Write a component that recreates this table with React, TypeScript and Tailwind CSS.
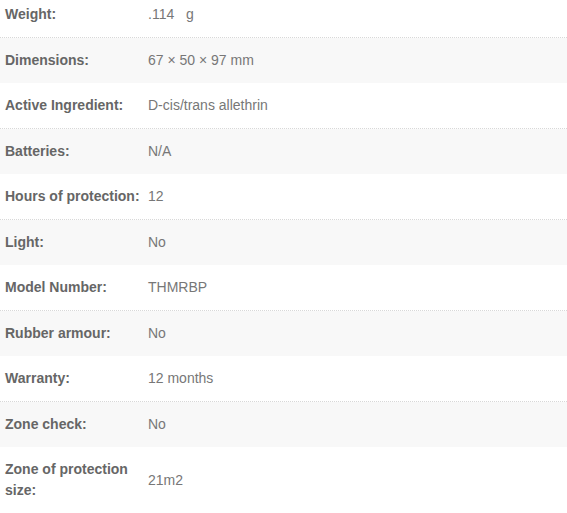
const specs: [string, string][] = [
  ['Weight:', '.114\u00a0\u00a0 g'],
  ['Dimensions:', '67 × 50 × 97 mm'],
  ['Active Ingredient:', 'D-cis/trans allethrin'],
  ['Batteries:', 'N/A'],
  ['Hours of protection:', '12'],
  ['Light:', 'No'],
  ['Model Number:', 'THMRBP'],
  ['Rubber armour:', 'No'],
  ['Warranty:', '12 months'],
  ['Zone check:', 'No'],
  ['Zone of protection size:', '21m2'],
];

export default function App() {
  return (
    <div className="w-[567px] bg-white font-['Liberation_Sans',Arial,sans-serif] text-[14px] leading-[21px]">
      <div className="-mt-[8px]">
        {specs.map(([label, value], i) => (
          <div
            key={label}
            className={
              i % 2 === 1
                ? 'grid grid-cols-[148px_1fr] items-center bg-[#f8f8f8] py-[12px]'
                : 'grid grid-cols-[148px_1fr] items-center border-b border-dotted border-[#d8d8d8] bg-white py-[12px] last:border-b-0'
            }
          >
            <div className="pl-[5px] pr-[4px] font-bold text-[#666]">{label}</div>
            <div className="text-[#777]">{value}</div>
          </div>
        ))}
      </div>
    </div>
  );
}
